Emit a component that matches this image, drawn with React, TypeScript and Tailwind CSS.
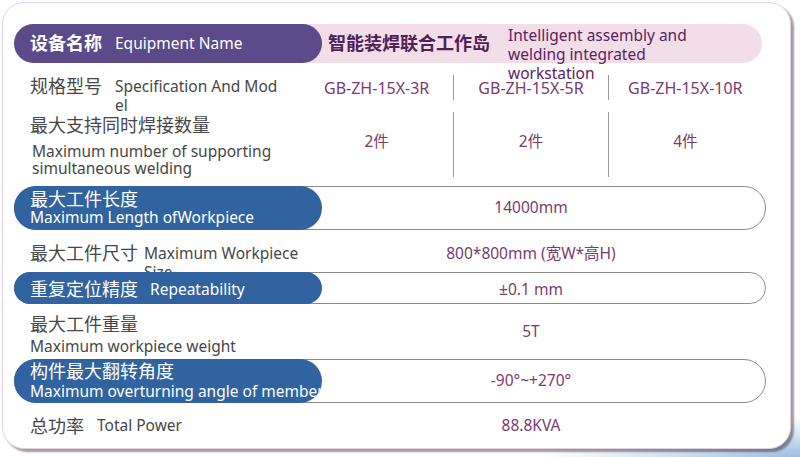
import type { ReactNode } from "react";

const FONT = "font-['Noto_Sans','Noto_Sans_CJK_SC',sans-serif]";

interface PillRowProps {
  h: string;
  label: ReactNode;
  value: ReactNode;
}

// bordered row with the blue label pill laid over its left end
function PillRow({ h, label, value }: PillRowProps) {
  return (
    <div className={`flex items-stretch rounded-full border border-[#8c8c8c] ${h}`}>
      <div className="relative z-10 -my-px -ml-px flex w-[308px] shrink-0 flex-col justify-center rounded-full bg-[#3063a0] pl-4 text-white overflow-hidden whitespace-nowrap">
        {label}
      </div>
      <div className="-ml-[22px] flex w-[462px] items-center justify-center text-[15.5px] text-[#7a3b6e]">
        {value}
      </div>
    </div>
  );
}

function Cells({ items, h }: { items: string[]; h: string }) {
  return (
    <div className="flex w-full">
      {items.map((v, i) => (
        <div
          key={i}
          className={`flex flex-1 items-center justify-center ${h} ${i > 0 ? "border-l border-[#9a9a9a]" : ""}`}
        >
          {v}
        </div>
      ))}
    </div>
  );
}

export default function App() {
  return (
    <div
      className={`h-[457px] w-[800px] overflow-hidden bg-[radial-gradient(ellipse_260px_40px_at_100%_100%,#9dbde0_0%,#d6e4f2_55%,#ffffff_100%)] pl-[2px] pt-[2px] ${FONT}`}
    >
      <div className="h-[447px] w-[789px] rounded-[22px] border border-[#e6d0e2] bg-white pl-[11px] pt-[21px] shadow-[3px_3px_2px_rgba(0,0,0,0.38)]">
        <div className="w-[752px]">
          {/* header */}
          <div className="flex h-[39px]">
            <div className="relative z-10 flex w-[308px] shrink-0 items-center rounded-full bg-[#5d4a8a] pl-4 text-white">
              <span className="text-[18px] font-bold">设备名称</span>
              <span className="ml-[13px] text-[15.5px]">Equipment Name</span>
            </div>
            <div className="-ml-[22px] flex w-[462px] rounded-r-full bg-[#f2dde8] pl-[28px]">
              <span className="self-center text-[18px] font-bold text-[#4f2157]">智能装焊联合工作岛</span>
              <span className="ml-[18px] mt-[2px] w-[196px] self-start text-[15.5px] leading-[19px] text-[#5b2460]">
                Intelligent assembly and welding integrated workstation
              </span>
            </div>
          </div>

          {/* 规格型号 */}
          <div className="flex h-[49px] text-[#474747]">
            <div className="flex w-[308px] shrink-0 items-start pl-4 pt-[14px] leading-[19px]">
              <span className="text-[18px]">规格型号</span>
              <span className="ml-[13px] w-[164px] break-all text-[15.5px]">Specification And Model</span>
            </div>
            <div className="-ml-[22px] w-[462px] pt-[12px] text-[16px] text-[#7a3b6e]">
              <Cells items={["GB-ZH-15X-3R", "GB-ZH-15X-5R", "GB-ZH-15X-10R"]} h="h-[25px]" />
            </div>
          </div>

          {/* 最大支持同时焊接数量 */}
          <div className="flex h-[74px] text-[#474747]">
            <div className="flex w-[308px] shrink-0 flex-col pl-4 pt-[2px]">
              <span className="text-[18px] leading-[22px]">最大支持同时焊接数量</span>
              <span className="mt-[7px] pl-[2px] text-[15.5px] leading-[17px]">
                Maximum number of supporting
                <br />
                simultaneous welding
              </span>
            </div>
            <div className="-ml-[22px] w-[462px] text-[15.5px] text-[#7a3b6e]">
              <Cells items={["2件", "2件", "4件"]} h="h-[65px] pb-[6px]" />
            </div>
          </div>

          <PillRow
            h="h-[44px]"
            label={
              <>
                <span className="text-[18px] leading-[18px]">最大工件长度</span>
                <span className="text-[15.5px] leading-[18px]">Maximum Length ofWorkpiece</span>
              </>
            }
            value="14000mm"
          />

          {/* 最大工件尺寸 */}
          <div className="flex h-[42px] text-[#474747]">
            <div className="flex w-[308px] shrink-0 items-start pl-4 pt-[14px] leading-[19px]">
              <span className="text-[18px]">最大工件尺寸</span>
              <span className="ml-[6px] w-[160px] text-[15.5px]">Maximum Workpiece Size</span>
            </div>
            <div className="-ml-[22px] flex w-[462px] justify-center pt-[14px] text-[15.5px] leading-[19px] text-[#7a3b6e]">
              800*800mm (宽W*高H)
            </div>
          </div>

          <PillRow
            h="h-[32px]"
            label={
              <div className="flex items-center pt-[3px]">
                <span className="text-[18px]">重复定位精度</span>
                <span className="ml-[12px] text-[15.5px]">Repeatability</span>
              </div>
            }
            value={<span className="pt-[3px]">±0.1 mm</span>}
          />

          {/* 最大工件重量 */}
          <div className="flex h-[55px] text-[#474747]">
            <div className="flex w-[308px] shrink-0 flex-col pl-4 pt-[9px]">
              <span className="text-[18px] leading-[22px]">最大工件重量</span>
              <span className="mt-[2px] text-[15.5px] leading-[18px]">Maximum workpiece weight</span>
            </div>
            <div className="-ml-[22px] flex w-[462px] items-center justify-center text-[15.5px] text-[#7a3b6e]">
              5T
            </div>
          </div>

          <PillRow
            h="h-[44px]"
            label={
              <>
                <span className="text-[18px] leading-[20px]">构件最大翻转角度</span>
                <span className="text-[15.5px] leading-[20px]">Maximum overturning angle of member</span>
              </>
            }
            value="-90°~+270°"
          />

          {/* 总功率 */}
          <div className="flex h-[46px] text-[#474747]">
            <div className="flex w-[308px] shrink-0 items-center pl-4">
              <span className="text-[18px]">总功率</span>
              <span className="ml-[13px] text-[15.5px]">Total Power</span>
            </div>
            <div className="-ml-[22px] flex w-[462px] items-center justify-center text-[15.5px] text-[#7a3b6e]">
              88.8KVA
            </div>
          </div>
        </div>
      </div>
    </div>
  );
}
